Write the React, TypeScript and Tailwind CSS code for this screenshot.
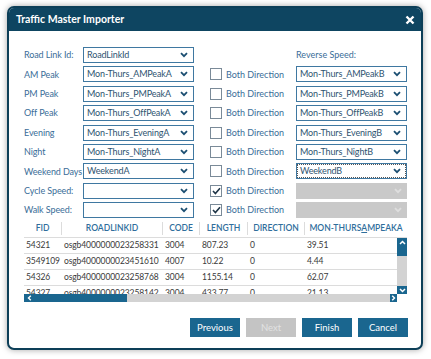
import React from "react";

const font = { fontFamily: 'Lato, "Liberation Sans", sans-serif' };

const rows = [
  { label: "Road Link Id:", value: "RoadLinkId", check: null, reverse: null },
  { label: "AM Peak", value: "Mon-Thurs_AMPeakA", check: false, reverse: "Mon-Thurs_AMPeakB" },
  { label: "PM Peak", value: "Mon-Thurs_PMPeakA", check: false, reverse: "Mon-Thurs_PMPeakB" },
  { label: "Off Peak", value: "Mon-Thurs_OffPeakA", check: false, reverse: "Mon-Thurs_OffPeakB" },
  { label: "Evening", value: "Mon-Thurs_EveningA", check: false, reverse: "Mon-Thurs_EveningB" },
  { label: "Night", value: "Mon-Thurs_NightA", check: false, reverse: "Mon-Thurs_NightB" },
  { label: "Weekend Days", value: "WeekendA", check: false, reverse: "WeekendB" },
  { label: "Cycle Speed:", value: "", check: true, reverse: "" },
  { label: "Walk Speed:", value: "", check: true, reverse: "" },
];

const data = [
  ["54321", "osgb4000000023258331", "3004", "807.23", "0", "39.51"],
  ["3549109", "osgb4000000023451610", "4007", "10.22", "0", "4.44"],
  ["54326", "osgb4000000023258768", "3004", "1155.14", "0", "62.07"],
  ["54327", "osgb4000000023258142", "3004", "433.77", "0", "21.13"],
];

const cols = "grid grid-cols-[38px_101px_37px_48px_57px_1fr]";

function Chevron({ color = "#1c4f72" }: { color?: string }) {
  return (
    <svg width="8" height="6" viewBox="0 0 8 6" className="shrink-0">
      <path d="M1 1.2 L4 4.2 L7 1.2" fill="none" stroke={color} strokeWidth="1.8" />
    </svg>
  );
}

function Select({ value, disabled, focus }: { value: string; disabled?: boolean; focus?: boolean }) {
  if (disabled) {
    return (
      <div className="h-[16px] bg-[#c9c9c9] flex items-center justify-end pr-[5px]">
        <Chevron color="#dedede" />
      </div>
    );
  }
  return (
    <div
      className={`h-[16px] border border-[#3f78a1] bg-white flex items-center justify-between pl-[3px] pr-[5px] ${
        focus ? "outline outline-1 outline-dotted outline-[#555] -outline-offset-2" : ""
      }`}>
      <span className="text-[9px] tracking-[-0.15px] text-[#2e5370] leading-[14px] whitespace-nowrap">{value}</span>
      <Chevron />
    </div>
  );
}

function Check({ checked }: { checked: boolean }) {
  return (
    <div className="w-[12px] h-[12px] shrink-0 border border-[#7a8a98] bg-white flex items-center justify-center">
      {checked && (
        <svg width="9" height="8" viewBox="0 0 9 8">
          <path d="M1 4 L3.4 6.5 L8 1.2" fill="none" stroke="#1f3547" strokeWidth="1.6" />
        </svg>
      )}
    </div>
  );
}

function Button({ label, disabled }: { label: string; disabled?: boolean }) {
  return (
    <div
      className={`w-[50px] h-[19px] flex items-center justify-center text-[9.5px] ${
        disabled ? "bg-[#c4c4c4] text-[#e2e2e2]" : "bg-[#1a668f] text-white"
      }`}>
      {label}
    </div>
  );
}

export default function App() {
  return (
    <div className="w-[431px] h-[359px] bg-white pt-[6px] pl-[7px]" style={font}>
      <div className="w-[416px] h-[344px] rounded-[7px] border-2 border-[#0d3f58] overflow-hidden flex flex-col bg-white shadow-[0_0_6px_rgba(0,0,0,0.35)]">
        <div className="h-[23px] bg-[#0e4561] flex items-center justify-between pl-[7px] pr-[6px]">
          <span className="text-white font-bold text-[10.5px]">Traffic Master Importer</span>
          <svg width="10" height="10" viewBox="0 0 10 10">
            <path d="M1.5 1.5 L8.5 8.5 M8.5 1.5 L1.5 8.5" stroke="white" strokeWidth="2.4" />
          </svg>
        </div>

        <div className="flex-1 pl-[15px] pr-[14px] pt-[16px] flex flex-col">
          <div className="grid grid-cols-[59px_111px_102px_111px] gap-y-[3.4px] auto-rows-[16px]">
            {rows.map((r, i) => (
              <React.Fragment key={r.label}>
                <div className="flex items-center text-[9px] tracking-[-0.1px] text-[#3a6d98] whitespace-nowrap">{r.label}</div>
                <Select value={r.value} />
                <div className="flex items-center pl-[16px] gap-[4px]">
                  {r.check !== null && (
                    <>
                      <Check checked={r.check} />
                      <span className="text-[9px] text-[#3a6d98] whitespace-nowrap">Both Direction</span>
                    </>
                  )}
                </div>
                {r.reverse === null ? (
                  <div className="flex items-center text-[9px] text-[#3a6d98]">Reverse Speed:</div>
                ) : (
                  <Select value={r.reverse} disabled={i >= 7} focus={i === 6} />
                )}
              </React.Fragment>
            ))}
          </div>

          <div className="mt-[2px] flex flex-col">
            <div className={`${cols} h-[18px] border-b border-[#dcdcdc] text-[8.5px] text-[#2f6e9c] font-semibold`}>
              {["FID", "ROADLINKID", "CODE", "LENGTH", "DIRECTION"].map((h) => (
                <div key={h} className="flex items-center justify-center border-r border-[#dcdcdc] my-[2px]">
                  {h}
                </div>
              ))}
              <div className="flex items-center justify-center whitespace-nowrap">
                MON-THURS<span className="underline">A</span>MPEAKA
              </div>
            </div>
            <div className="flex h-[56px]">
              <div className="flex-1 overflow-hidden">
                {data.map((d) => (
                  <div key={d[0]} className={`${cols} h-[16px] border-b border-[#dcdcdc] text-[8.5px] tracking-[-0.1px] text-[#3a3a3a]`}>
                    {d.map((c, j) => (
                      <div key={j} className="flex items-center pl-[2px] whitespace-nowrap">
                        {c}
                      </div>
                    ))}
                  </div>
                ))}
              </div>
              <div className="w-[10px] flex flex-col bg-[#d3d3d3]">
                <div className="h-[18px] bg-[#1a668f] flex justify-center pt-[2px]">
                  <svg width="7" height="5" viewBox="0 0 7 5">
                    <path d="M1 4 L3.5 1.5 L6 4" fill="none" stroke="white" strokeWidth="1.5" />
                  </svg>
                </div>
                <div className="flex-1" />
                <div className="h-[8px] bg-[#1a668f] flex items-center justify-center">
                  <svg width="7" height="5" viewBox="0 0 7 5">
                    <path d="M1 1 L3.5 3.5 L6 1" fill="none" stroke="white" strokeWidth="1.5" />
                  </svg>
                </div>
              </div>
            </div>
            <div className="flex h-[8px] pr-[10px]">
              <div className="w-[103px] bg-[#1a668f] flex items-center pl-[3px]">
                <svg width="5" height="6" viewBox="0 0 5 6">
                  <path d="M3.8 0.8 L1.5 3 L3.8 5.2" fill="none" stroke="white" strokeWidth="1.4" />
                </svg>
              </div>
              <div className="flex-1 bg-[#d3d3d3]" />
              <div className="w-[7px] bg-[#1a668f] flex items-center justify-center">
                <svg width="5" height="6" viewBox="0 0 5 6">
                  <path d="M1.2 0.8 L3.5 3 L1.2 5.2" fill="none" stroke="white" strokeWidth="1.4" />
                </svg>
              </div>
            </div>
          </div>

          <div className="mt-[16px] flex justify-end gap-[6px] mr-[-1px]">
            <Button label="Previous" />
            <Button label="Next" disabled />
            <Button label="Finish" />
            <Button label="Cancel" />
          </div>
        </div>
      </div>
    </div>
  );
}
